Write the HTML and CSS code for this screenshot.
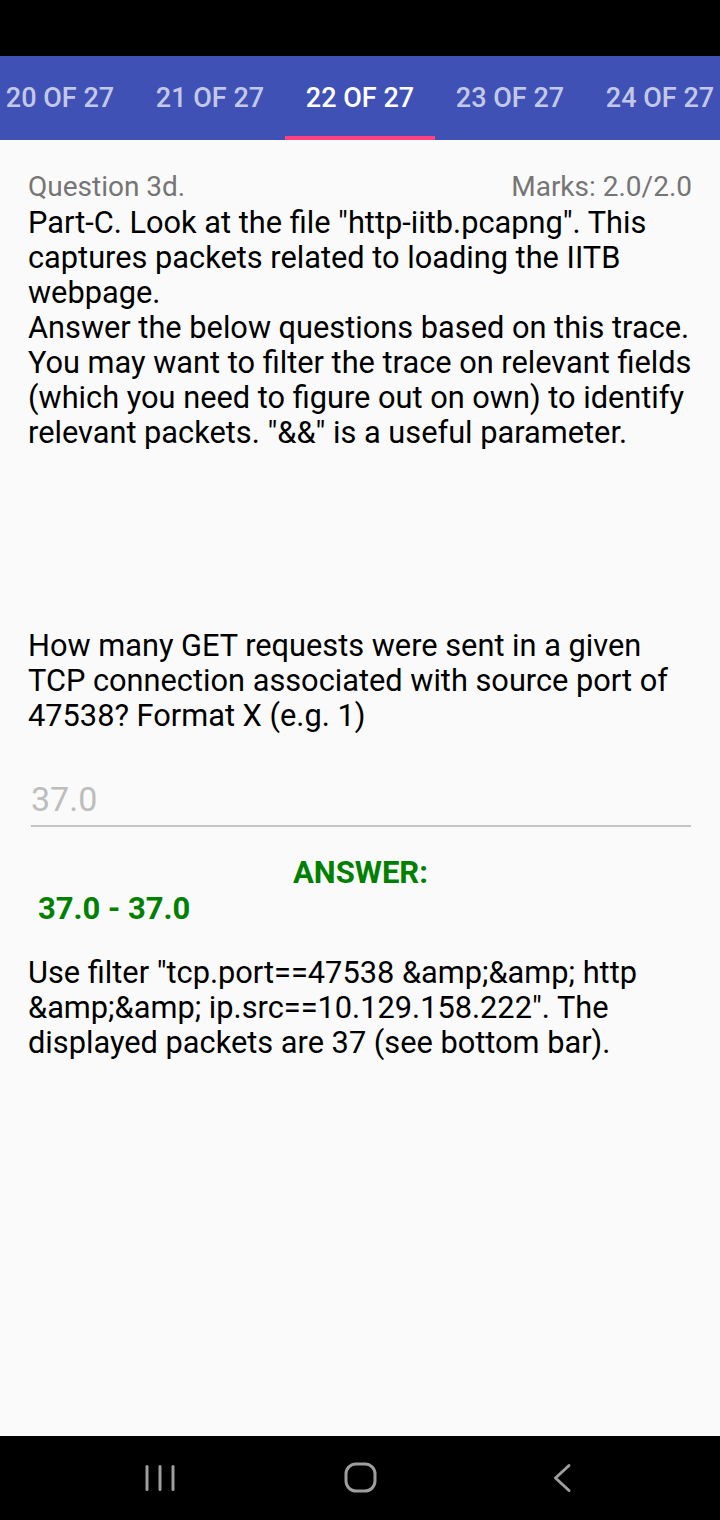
FILE: index.html
```html
<!DOCTYPE html>
<html>
<head>
<meta charset="utf-8">
<link rel="stylesheet" href="styles.css">
</head>
<body>
<div class="screen">
  <div class="status"></div>
  <div class="tabs">
    <div class="strip">
      <div class="tab">20 OF 27</div>
      <div class="tab">21 OF 27</div>
      <div class="tab active">22 OF 27</div>
      <div class="tab">23 OF 27</div>
      <div class="tab">24 OF 27</div>
    </div>
  </div>
  <main class="content">
    <div class="qhead">
      <span class="qnum">Question 3d.</span>
      <span class="marks">Marks: 2.0/2.0</span>
    </div>
    <p class="body intro">Part-C. Look at the file "http-iitb.pcapng". This captures packets related to loading the IITB webpage.<br>Answer the below questions based on this trace. You may want to filter the trace on relevant fields (which you need to figure out on own) to identify relevant packets. "&amp;&amp;" is a useful parameter.</p>
    <p class="body question">How many GET requests were sent in a given TCP connection associated with source port of 47538? Format X (e.g. 1)</p>
    <div class="field"><span class="value">37.0</span></div>
    <div class="answer-label">ANSWER:</div>
    <div class="answer-range">37.0 - 37.0</div>
    <p class="body explain">Use filter "tcp.port==47538 &amp;amp;&amp;amp; http &amp;amp;&amp;amp; ip.src==10.129.158.222". The displayed packets are 37 (see bottom bar).</p>
  </main>
  <div class="nav">
    <div class="slot"><svg width="30" height="30" viewBox="0 0 30 30"><g stroke="#9e9e9e" stroke-width="3" stroke-linecap="round"><line x1="2" y1="3.5" x2="2" y2="26.5"/><line x1="15" y1="3.5" x2="15" y2="26.5"/><line x1="28" y1="3.5" x2="28" y2="26.5"/></g></svg></div>
    <div class="slot"><svg width="34" height="32" viewBox="0 0 34 32"><rect x="2" y="2" width="29" height="27" rx="10" fill="none" stroke="#9e9e9e" stroke-width="3"/></svg></div>
    <div class="slot"><svg width="24" height="30" viewBox="0 0 24 30"><polyline points="19,2.5 5.5,15 19,27.5" fill="none" stroke="#9e9e9e" stroke-width="3" stroke-linecap="round" stroke-linejoin="round"/></svg></div>
  </div>
</div>
</body>
</html>
```

FILE: styles.css
```css
* { box-sizing: border-box; }
html, body { margin: 0; padding: 0; }
body { font-family: Roboto, "Noto Sans", sans-serif; background: #fafafa; }
.screen { width: 720px; height: 1520px; display: flex; flex-direction: column; overflow: hidden; }
.status { height: 56px; background: #000; flex: none; }
.tabs { height: 84px; background: #3f51b5; overflow: hidden; flex: none; }
.strip { display: flex; margin-left: -15px; height: 100%; }
.tab { flex: none; width: 150px; height: 84px; display: flex; align-items: center; justify-content: center; font-size: 27px; font-weight: 500; color: rgba(255,255,255,0.7); white-space: nowrap; padding-top: 4px; border-bottom: 4px solid transparent; }
.tab.active { color: #fff; border-bottom-color: #ff4081; }
.content { flex: 1; padding: 30px 27px 0 28px; }
.qhead { display: flex; justify-content: space-between; font-size: 28px; line-height: 33px; color: #757575; padding-right: 1px; }
.body { margin: 0; font-size: 30.75px; line-height: 35px; color: #000; }
.intro { margin-top: 2px; }
.question { margin-top: 178px; }
.field { margin: 46px 2px 0 3px; height: 48px; border-bottom: 2px solid #c4c4c4; }
.value { display: block; font-size: 34px; line-height: 40px; color: #bdbdbd; }
.answer-label { margin-top: 28px; text-align: center; font-size: 31px; font-weight: 700; color: #008000; line-height: 36px; }
.answer-range { margin-left: 10px; font-size: 31px; font-weight: 700; color: #008000; line-height: 36px; }
.explain { margin-top: 28px; }
.nav { height: 84px; background: #000; flex: none; display: grid; grid-template-columns: repeat(3, 201px); justify-content: center; align-items: center; padding-left: 2px; }
.slot { display: flex; justify-content: center; align-items: center; }
.slot svg { display: block; }
```
